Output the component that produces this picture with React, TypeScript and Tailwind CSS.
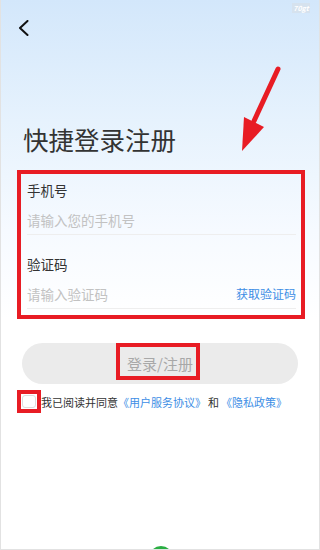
import React from "react";

export default function App() {
  const font = { fontFamily: '"Noto Sans CJK SC", "Noto Sans", sans-serif' };
  return (
    <div
      className="relative w-[320px] h-[550px] overflow-hidden border-x border-b border-[#e2e2e2] bg-[linear-gradient(180deg,#d3e7fb_0%,#e6f2fd_22%,#f6faff_42%,#ffffff_58%)]"
      style={font}
    >
      {/* watermark */}
      <div className="absolute top-[3px] right-[9px] w-[18px] h-[10px] bg-[#d6e2ee] text-white text-[7px] leading-[10px] font-bold italic text-center">
        70gt
      </div>

      {/* back chevron */}
      <div className="pt-[20px] pl-[17px]">
        <svg width="11" height="16" viewBox="0 0 11 16" fill="none">
          <path d="M9.5 1 L2 8 L9.5 15" stroke="#111" strokeWidth="2" strokeLinecap="round" strokeLinejoin="round" />
        </svg>
      </div>

      {/* annotation arrow */}
      <svg className="absolute left-0 top-0" width="320" height="200" viewBox="0 0 320 200">
        <line x1="277" y1="69" x2="253" y2="121" stroke="#e81c24" strokeWidth="5" strokeLinecap="round" />
        <polygon points="243,117 263,127 241,151" fill="#e81c24" />
      </svg>

      {/* title */}
      <div className="mt-[87px] pl-[22px] text-[25.5px] leading-[31px] text-[#333333] tracking-[0px]">
        快捷登录注册
      </div>

      {/* form (annotated) */}
      <div className="mt-[16px] mx-[16px] w-[288px] border-[4px] border-[#e81c24] pl-[6px] pr-[5px] pt-[6px] pb-[6px]">
        <div className="text-[13.5px] leading-[20px] text-[#333333]">手机号</div>
        <div className="mt-[10px] text-[13.5px] leading-[20px] text-[#c2c2c2] pb-[4px] border-b border-[#eeeeee]">
          请输入您的手机号
        </div>
        <div className="mt-[19px] text-[13.5px] leading-[20px] text-[#333333]">验证码</div>
        <div className="mt-[10px] flex items-center justify-between pb-[4px] border-b border-[#eeeeee]">
          <span className="text-[13.5px] leading-[20px] text-[#c2c2c2]">请输入验证码</span>
          <span className="text-[12px] leading-[20px] text-[#3d8ee5]">获取验证码</span>
        </div>
      </div>

      {/* button */}
      <div className="relative mt-[24px] mx-[21px] h-[41px] rounded-full bg-[#ebebeb] flex items-center justify-center">
        <span className="text-[15px] leading-[20px] text-[#a8a8a8]">登录/注册</span>
        <div className="absolute left-[94px] top-0 w-[84px] h-[37px] border-[4px] border-[#e81c24]" />
      </div>

      {/* agreement */}
      <div className="mt-[6px] pl-[16px] flex items-center">
        <div className="w-[24px] h-[23px] border-[4px] border-[#e81c24] bg-white flex items-center justify-center">
          <div className="w-[14px] h-[13px] rounded-[3px] border border-[#dddddd] bg-white" />
        </div>
        <span className="text-[11px] leading-[16px] text-[#333333] whitespace-nowrap">
          我已阅读并同意
          <span className="text-[#3d8ee5]">《用户服务协议》</span>
          <span className="px-[2px]">和</span>
          <span className="text-[#3d8ee5]">《隐私政策》</span>
        </span>
      </div>

      {/* bottom green circle */}
      <div className="absolute left-[148px] top-[546px] w-[24px] h-[24px] rounded-full bg-[#2aae43]" />
    </div>
  );
}
